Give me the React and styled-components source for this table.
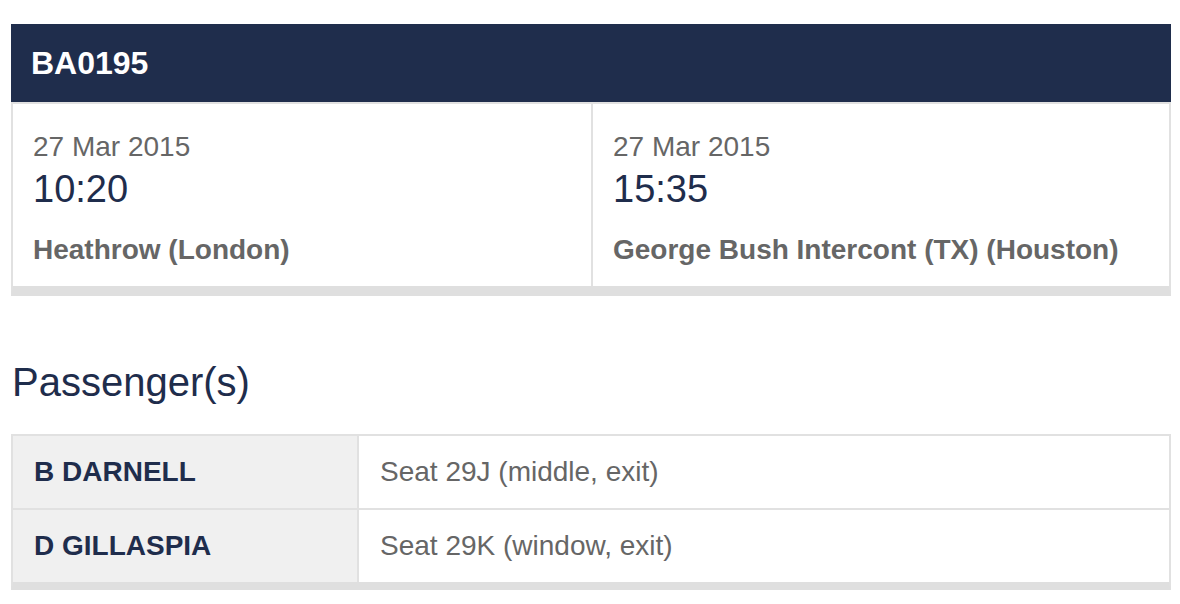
import React from "react";
import styled, { createGlobalStyle } from "styled-components";

const Global = createGlobalStyle`
  html, body { margin: 0; padding: 0; background: #ffffff; }
  body { font-family: "Liberation Sans", Arial, Helvetica, sans-serif; }
  * { box-sizing: border-box; }
`;

const NAVY = "#1f2d4c";
const GREY_TEXT = "#666666";
const LINE = "#e1e1e1";
const BAR = "#dfdfdf";

const Page = styled.main`
  padding: 24px 9px 0 11px;
  width: 1180px;
`;

const FlightHeader = styled.header`
  height: 78px;
  background: ${NAVY};
  display: flex;
  align-items: center;
  padding: 0 20px;
  color: #ffffff;
  font-weight: 700;
  font-size: 32px;
`;

const Card = styled.section`
  display: grid;
  grid-template-columns: 1fr 1fr;
  border: 2px solid ${LINE};
  border-bottom: 10px solid ${BAR};
`;

const Leg = styled.div`
  padding: 27px 20px 20px 20px;
  border-left: ${(p) => (p.$divided ? `2px solid ${LINE}` : "none")};
  display: flex;
  flex-direction: column;
`;

const LegDate = styled.div`
  font-size: 28px;
  line-height: 32px;
  color: ${GREY_TEXT};
`;

const LegTime = styled.div`
  margin-top: 4px;
  font-size: 38px;
  line-height: 44px;
  color: ${NAVY};
`;

const LegPlace = styled.div`
  margin-top: 23px;
  font-size: 28px;
  line-height: 32px;
  font-weight: 700;
  color: ${GREY_TEXT};
`;

const SectionTitle = styled.h2`
  margin: 63px 0 29px 1px;
  font-size: 40px;
  line-height: 46px;
  font-weight: 400;
  color: ${NAVY};
`;

const PassengerTable = styled.div`
  display: grid;
  grid-template-columns: 344px 1fr;
  row-gap: 2px;
  background: ${LINE};
  border: 2px solid ${LINE};
  border-bottom: 8px solid ${BAR};
`;

const Cell = styled.div`
  height: 72px;
  display: flex;
  align-items: center;
  padding-left: 21px;
  font-size: 28px;
  background: ${(p) => (p.$name ? "#f0f0f0" : "#ffffff")};
  color: ${(p) => (p.$name ? NAVY : GREY_TEXT)};
  font-weight: ${(p) => (p.$name ? 700 : 400)};
  border-left: ${(p) => (p.$name ? "none" : `2px solid ${LINE}`)};
`;

const legs = [
  { date: "27 Mar 2015", time: "10:20", place: "Heathrow (London)" },
  { date: "27 Mar 2015", time: "15:35", place: "George Bush Intercont (TX) (Houston)" },
];

const passengers = [
  { name: "B DARNELL", seat: "Seat 29J (middle, exit)" },
  { name: "D GILLASPIA", seat: "Seat 29K (window, exit)" },
];

export default function App() {
  return (
    <>
      <Global />
      <Page>
        <FlightHeader>BA0195</FlightHeader>
        <Card>
          {legs.map((l, i) => (
            <Leg key={i} $divided={i > 0}>
              <LegDate>{l.date}</LegDate>
              <LegTime>{l.time}</LegTime>
              <LegPlace>{l.place}</LegPlace>
            </Leg>
          ))}
        </Card>
        <SectionTitle>Passenger(s)</SectionTitle>
        <PassengerTable>
          {passengers.map((p) => (
            <React.Fragment key={p.name}>
              <Cell $name>{p.name}</Cell>
              <Cell>{p.seat}</Cell>
            </React.Fragment>
          ))}
        </PassengerTable>
      </Page>
    </>
  );
}
